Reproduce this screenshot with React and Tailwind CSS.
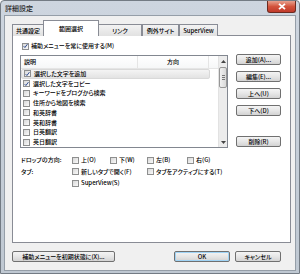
import React from "react";

function Check({ checked }) {
  return (
    <span className="w-[7px] h-[7px] shrink-0 border border-[#8e8f8f] bg-gradient-to-br from-[#d8d8d8] to-[#fafafa] flex items-center justify-center">
      {checked && (
        <svg width="6" height="6" viewBox="0 0 6 6">
          <path d="M0.8 3.2 L2.3 4.8 L5.3 0.8" fill="none" stroke="#2d4b8e" strokeWidth="1.2" />
        </svg>
      )}
    </span>
  );
}

function Btn({ children, className = "" }) {
  return (
    <div
      className={`h-[11px] flex items-center justify-center rounded-[2px] border border-[#707070] bg-gradient-to-b from-[#f4f4f4] via-[#e6e6e6] to-[#d3d3d3] text-[6px] leading-[8px] text-black ${className}`}
    >
      {children}
    </div>
  );
}

function Opt({ label, checked, className = "" }) {
  return (
    <div className={`flex items-center gap-[2px] ${className}`}>
      <Check checked={checked} />
      <span>{label}</span>
    </div>
  );
}

export default function App() {
  const items = [
    { text: "選択した文字を追加", on: true, sel: true },
    { text: "選択した文字をコピー", on: true },
    { text: "キーワードをブログから検索" },
    { text: "住所から地図を検索" },
    { text: "和英辞書" },
    { text: "英和辞書" },
    { text: "日英翻訳" },
    { text: "英日翻訳" },
  ];

  const tabs = [
    { label: "共通設定", w: "w-[32px]" },
    { label: "範囲選択", w: "w-[56px]", active: true },
    { label: "リンク", w: "w-[44px]" },
    { label: "例外サイト", w: "w-[37px]" },
    { label: "SuperView", w: "w-[39px]" },
  ];

  return (
    <div className="w-[300px] h-[274px] relative flex flex-col bg-gradient-to-b from-[#cdd5df] to-[#bfc8d2] border border-[#737b84] rounded-t-[4px] overflow-hidden font-['Noto_Sans_CJK_JP','Liberation_Sans',sans-serif] font-medium [font-feature-settings:'palt'] text-black">
      {/* title bar */}
      <div className="h-[14px] flex items-center pl-[4px] text-[7px] leading-[9px] text-[#1e1e1e]">
        詳細設定
      </div>
      <div className="absolute top-0 right-[3px] w-[29px] h-[12px] rounded-b-[3px] border border-t-0 border-[#6b2a20] bg-gradient-to-b from-[#e6a08e] via-[#d2533c] to-[#c0392a] flex items-center justify-center">
        <svg width="8" height="7" viewBox="0 0 8 7">
          <path d="M1 0.8 L7 6.2 M7 0.8 L1 6.2" stroke="#ffffff" strokeWidth="1.8" />
        </svg>
      </div>

      {/* client area */}
      <div className="flex-1 mx-[3px] mb-[2px] border border-[#959ea8] bg-[#f0f0f0] flex flex-col pl-[7px] pr-[4px] pt-[5px] text-[6px] leading-[8px]">
        {/* tabs */}
        <div className="flex items-end h-[15px] relative z-10 -mb-[1px]">
          {tabs.map((t) =>
            t.active ? (
              <div
                key={t.label}
                className={`${t.w} h-[16px] -ml-[1px] -mr-[1px] border border-b-0 border-[#898c95] bg-white flex items-center justify-center`}
              >
                {t.label}
              </div>
            ) : (
              <div
                key={t.label}
                className={`${t.w} h-[12px] border border-b-0 border-[#898c95] bg-gradient-to-b from-[#f3f3f3] to-[#e1e1e1] flex items-center justify-center`}
              >
                {t.label}
              </div>
            )
          )}
        </div>

        {/* panel */}
        <div className="h-[208px] border border-[#898c95] bg-white flex flex-col pl-[7px] pt-[6px]">
          <div className="h-[8px] pl-[2px] flex items-center gap-[2px]">
            <Check checked />
            <span>補助メニューを常に使用する(M)</span>
          </div>

          <div className="flex mt-[5px] gap-[8px]">
            {/* list box */}
            <div className="w-[208px] h-[93px] border border-[#828790] bg-white flex">
              <div className="flex-1 flex flex-col">
                <div className="h-[13px] flex items-center border-b border-[#e5e5e5] bg-gradient-to-b from-white to-[#f6f7f8]">
                  <div className="w-[117px] h-full flex items-center pl-[3px] border-r border-[#e5e5e5]">
                    説明
                  </div>
                  <div className="w-[71px] h-full flex items-center justify-center border-r border-[#e5e5e5]">
                    方向
                  </div>
                </div>
                {items.map((it) => (
                  <div
                    key={it.text}
                    className={`h-[9.75px] w-[189px] flex items-center gap-[3px] pl-[2px] ${
                      it.sel ? "bg-gradient-to-b from-[#f4f4f4] to-[#e3e3e3] rounded-[2px] border border-[#d9d9d9]" : ""
                    }`}
                  >
                    <Check checked={it.on} />
                    <span>{it.text}</span>
                  </div>
                ))}
              </div>
              {/* scrollbar */}
              <div className="w-[9px] bg-[#ececec] border-l border-[#e2e2e2] flex flex-col items-center">
                <div className="h-[10px] flex items-center justify-center">
                  <svg width="5" height="3" viewBox="0 0 5 3">
                    <path d="M0 3 L2.5 0 L5 3 Z" fill="#444" />
                  </svg>
                </div>
                <div className="w-[8px] h-[21px] mt-[1px] rounded-[2px] border border-[#979797] bg-gradient-to-r from-[#f1f1f1] to-[#d9d9d9] flex flex-col items-center justify-center gap-[1px]">
                  <span className="w-[3px] h-px bg-[#777]" />
                  <span className="w-[3px] h-px bg-[#777]" />
                  <span className="w-[3px] h-px bg-[#777]" />
                </div>
                <div className="flex-1" />
                <div className="h-[10px] flex items-center justify-center">
                  <svg width="5" height="3" viewBox="0 0 5 3">
                    <path d="M0 0 L2.5 3 L5 0 Z" fill="#444" />
                  </svg>
                </div>
              </div>
            </div>

            {/* side buttons */}
            <div className="w-[45px] flex flex-col gap-[6px] -mt-[1px]">
              <Btn>追加(A)...</Btn>
              <Btn>編集(E)...</Btn>
              <Btn>上へ(U)</Btn>
              <Btn>下へ(D)</Btn>
              <Btn className="mt-[14px]">削除(R)</Btn>
            </div>
          </div>

          {/* options */}
          <div className="mt-[8px] pl-[1px] flex flex-col gap-[3.5px]">
            <div className="h-[8px] flex items-center">
              <span className="w-[51px]">ドロップの方向:</span>
              <Opt label="上(O)" className="w-[38px]" />
              <Opt label="下(W)" className="w-[37px]" />
              <Opt label="左(B)" className="w-[40px]" />
              <Opt label="右(G)" />
            </div>
            <div className="h-[8px] flex items-center">
              <span className="w-[51px]">タブ:</span>
              <Opt label="新しいタブで開く(F)" className="w-[75px]" />
              <Opt label="タブをアクティブにする(T)" />
            </div>
            <div className="h-[8px] flex items-center">
              <span className="w-[51px]" />
              <Opt label="SuperView(S)" />
            </div>
          </div>
        </div>

        {/* bottom buttons */}
        <div className="mt-[8px] flex items-center">
          <Btn className="w-[103px]">補助メニューを初期状態に(X)...</Btn>
          <div className="flex-1" />
          <Btn className="w-[56px] border-[#3c7fb1] shadow-[inset_0_0_0_1px_#9fd3f5]">OK</Btn>
          <Btn className="w-[46px] ml-[5px] mr-[10px]">キャンセル</Btn>
        </div>
      </div>
    </div>
  );
}
